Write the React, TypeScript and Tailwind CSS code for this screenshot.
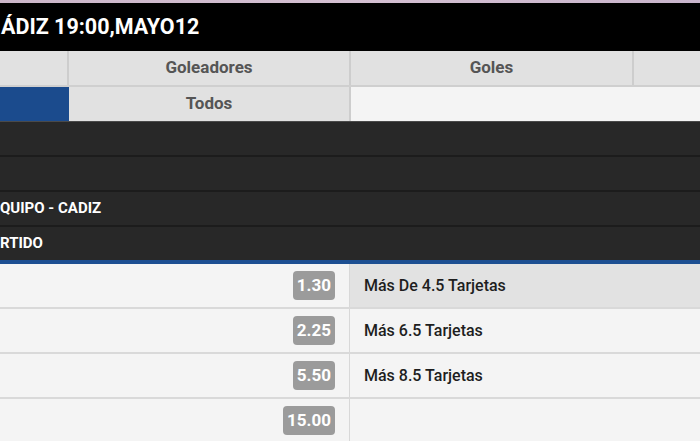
import React from "react";

const font = { fontFamily: "Roboto, 'Liberation Sans', sans-serif" };

export default function App() {
  const odds = [
    { o: "1.30", label: "Más De 4.5 Tarjetas", sel: true },
    { o: "2.25", label: "Más 6.5 Tarjetas", sel: false },
    { o: "5.50", label: "Más 8.5 Tarjetas", sel: false },
    { o: "15.00", label: "", sel: false },
  ];
  return (
    <div className="w-[700px] h-[441px] overflow-hidden bg-[#f4f4f4]" style={font}>
      <div className="h-[3px] bg-gradient-to-r from-[#cbb6c9] via-[#d4c0d2] to-[#c9b5cc]" />
      <div className="h-[48px] bg-black flex items-center pl-[1px] pt-[1px]">
        <span className="text-white font-bold text-[21.5px]">ÁDIZ 19:00,MAYO12</span>
      </div>
      <div className="grid grid-cols-[67px_2px_280px_2px_281px_2px_1fr] h-[34px] bg-[#e1e1e1]">
        <div />
        <div className="bg-[#cdcdcd]" />
        <div className="flex items-center justify-center text-[17px] font-bold text-[#555555]">Goleadores</div>
        <div className="bg-[#cdcdcd]" />
        <div className="flex items-center justify-center text-[17px] font-bold text-[#555555]">Goles</div>
        <div className="bg-[#cdcdcd]" />
        <div />
      </div>
      <div className="h-[2px] bg-[#cfcfcf]" />
      <div className="grid grid-cols-[69px_280px_2px_1fr] h-[34px]">
        <div className="bg-[#1b4b8d]" />
        <div className="bg-[#e1e1e1] flex items-center justify-center text-[17px] font-bold text-[#555555]">Todos</div>
        <div className="bg-[#cdcdcd]" />
        <div className="bg-[#f4f4f4]" />
      </div>
      <div className="h-[1px] bg-[#4a4a4a]" />
      <div className="flex flex-col bg-[#282828]">
        {["", "", "QUIPO - CADIZ", "RTIDO"].map((t, i) => (
          <div key={i} className="flex flex-col">
            <div className="h-[33px] flex items-center text-white font-bold text-[15px]">{t}</div>
            {i < 3 ? <div className="h-[2px] bg-[#1c1c1c]" /> : null}
          </div>
        ))}
      </div>
      <div className="h-[4px] bg-[#1d4f92]" />
      <div className="flex flex-col">
        {odds.map((r, i) => (
          <div key={i} className="flex flex-col">
            <div className="h-[43px] flex">
              <div className="w-[349px] flex items-center justify-end pr-[14px] bg-[#f4f4f4]">
                <span className="h-[29px] flex items-center px-[4px] rounded-[4px] bg-[#9b9b9b] text-white font-bold text-[17px] leading-none">
                  {r.o}
                </span>
              </div>
              <div className="w-[1px] bg-[#d8d8d8]" />
              <div className={`flex-1 flex items-center pl-[14px] text-[16px] font-medium text-[#1e1e1e] ${r.sel ? "bg-[#e2e2e2]" : "bg-[#f4f4f4]"}`}>
                {r.label}
              </div>
            </div>
            <div className="h-[2px] bg-[#d9d9d9]" />
          </div>
        ))}
      </div>
    </div>
  );
}
